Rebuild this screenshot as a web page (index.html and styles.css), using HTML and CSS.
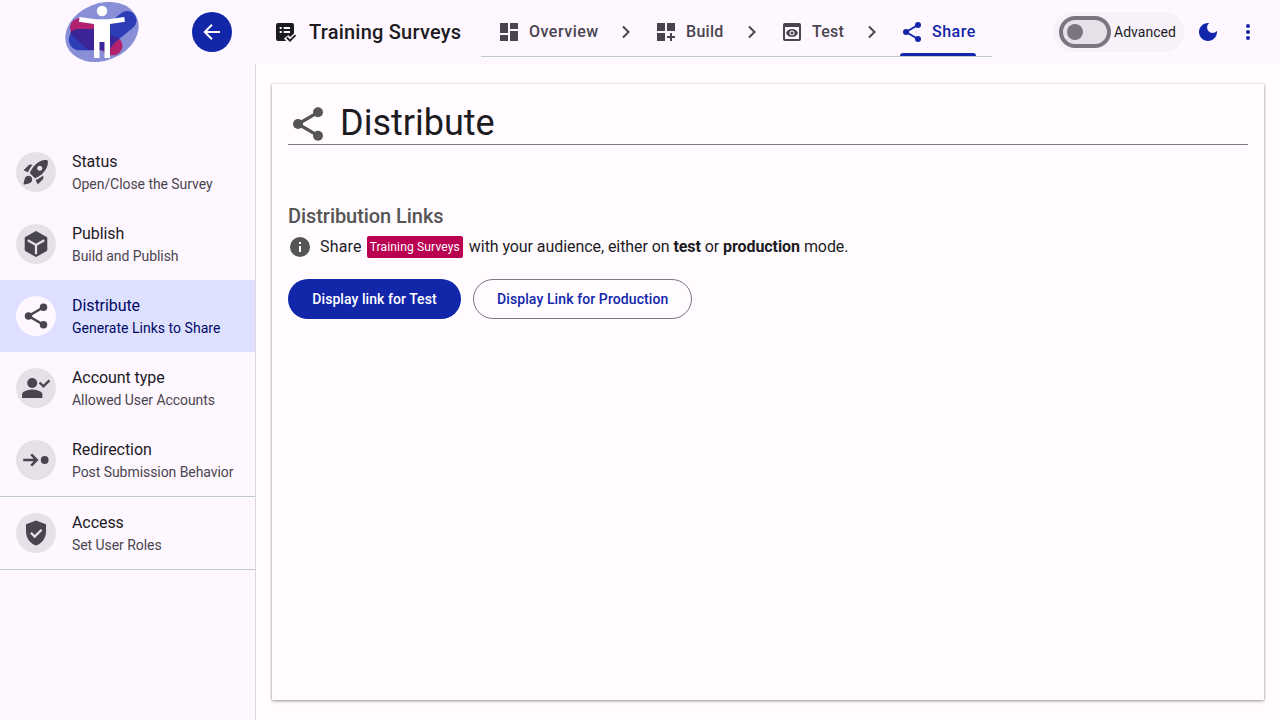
FILE: index.html
```html
<!DOCTYPE html>
<html lang="en">
<head>
<meta charset="utf-8">
<title>Training Surveys</title>
<link rel="stylesheet" href="styles.css">
</head>
<body>
<svg width="0" height="0" class="defs">
  <symbol id="share" viewBox="0 0 24 24"><g fill="currentColor"><circle cx="18" cy="5" r="3"/><circle cx="6" cy="12" r="3"/><circle cx="18" cy="19" r="3"/></g><path d="M18 5 6 12l12 7" fill="none" stroke="currentColor" stroke-width="2"/></symbol>
  <symbol id="chev" viewBox="0 0 24 24"><path d="M9 6.5 14.5 12 9 17.5" fill="none" stroke="currentColor" stroke-width="2"/></symbol>
</svg>
<header class="topbar">
  <div class="brand">
    <svg class="logo" viewBox="65 2 74 60" width="74" height="60">
      <ellipse cx="102" cy="32" rx="37.8" ry="28.6" transform="rotate(-21.6 102 32)" fill="#888fd6"/>
      <path d="M79.5 27.5 113 45.8" stroke="#b1216d" stroke-width="19" stroke-linecap="round"/>
      <path d="M127 20.5 103 40" stroke="#2d3db5" stroke-width="19" stroke-linecap="round"/>
      <path d="M79.5 39.7h24" stroke="#2d3db5" stroke-width="21.3" stroke-linecap="round"/>
      <path d="M71 31.500q3.500-2.500 8.500-2.500h16l23.500 9.500-12 11.500H88L70.500 34z" fill="#3a2498"/>
      <g fill="#fff"><circle cx="102" cy="11" r="5.2"/><path d="M79.500 17 96 19.200h12L124.200 17l.8 4.700L110 24v34h-5.500V42h-5v16H94V24l-15-2.300z"/></g>
    </svg>
    <button class="back" aria-label="Back"><svg width="24" height="24" viewBox="0 0 24 24"><path d="M20 12H5.500M12 4.700 4.700 12l7.300 7.300" fill="none" stroke="#fff" stroke-width="2"/></svg></button>
  </div>
  <div class="title">
    <svg width="24" height="24" viewBox="0 0 24 24"><path d="M5 3h14a2 2 0 0 1 2 2v8.500l-3.800 3.600-2-1.800-4.200 3.100L13.200 21H5a2 2 0 0 1-2-2V5a2 2 0 0 1 2-2z" fill="#1c1b1f"/><path d="M6.700 7.100h2v2h-2zM6.700 11h2v2h-2zM10.700 7.100H17v2h-6.300zM10.700 11H17v2h-6.300z" fill="#fef7ff"/><path d="m13.800 17.500 3.200 3.200 5.500-5.600" fill="none" stroke="#1c1b1f" stroke-width="1.800"/></svg>
    <span>Training Surveys</span>
  </div>
  <nav class="tabs">
    <a class="tab overview"><svg width="24" height="24" viewBox="0 0 24 24" fill="currentColor"><path d="M3 13h8V3H3zm0 8h8v-6H3zm10 0h8V11h-8zm0-18v6h8V3z"/></svg>Overview</a>
    <svg class="sep"><use href="#chev"/></svg>
    <a class="tab build"><svg width="24" height="24" viewBox="0 0 24 24" fill="currentColor"><path d="M3 3h8v8H3zm10 0h8v8h-8zM3 13h8v8H3zm13 0h2v3h3v2h-3v3h-2v-3h-3v-2h3z"/></svg>Build</a>
    <svg class="sep"><use href="#chev"/></svg>
    <a class="tab test"><svg width="24" height="24" viewBox="0 0 24 24" fill="currentColor"><path fill-rule="evenodd" d="M5 3h14a2 2 0 0 1 2 2v14a2 2 0 0 1-2 2H5a2 2 0 0 1-2-2V5a2 2 0 0 1 2-2zm0 4v12h14V7z"/><path fill-rule="evenodd" d="M12 9c2.700 0 5 1.600 6 4-1 2.400-3.300 4-6 4s-5-1.600-6-4c1-2.400 3.300-4 6-4zm0 1.500a2.500 2.500 0 1 0 0 5 2.500 2.500 0 0 0 0-5z"/><circle cx="12" cy="13" r="1.500"/></svg>Test</a>
    <svg class="sep"><use href="#chev"/></svg>
    <a class="tab active"><svg width="24" height="24"><use href="#share"/></svg>Share</a>
  </nav>
  <div class="actions">
    <label class="advanced"><span class="switch"><span class="thumb"></span></span>Advanced</label>
    <svg class="moon" width="24" height="24" viewBox="0 0 24 24" fill="#1226aa"><path d="M12 3c-4.970 0-9 4.030-9 9s4.030 9 9 9 9-4.030 9-9c0-.46-.04-.92-.1-1.360-.98 1.370-2.580 2.260-4.400 2.260-2.980 0-5.400-2.420-5.400-5.400 0-1.810.89-3.420 2.260-4.400C12.920 3.040 12.460 3 12 3z"/></svg>
    <svg width="24" height="24" viewBox="0 0 24 24" fill="#1226aa"><circle cx="12" cy="6" r="2"/><circle cx="12" cy="12" r="2"/><circle cx="12" cy="18" r="2"/></svg>
  </div>
</header>
<div class="body">
  <aside class="sidebar">
    <a class="item"><span class="avatar"><svg width="30" height="30" viewBox="0 0 24 24" fill="currentColor"><path d="M9.190 6.350c-2.040 2.290-3.440 5.580-3.570 5.890L2 10.690l4.050-4.050c.47-.47 1.150-.68 1.810-.55zM11.170 17s3.740-1.550 5.890-3.700c5.400-5.400 4.500-9.620 4.210-10.570-.95-.3-5.170-1.190-10.570 4.210C8.550 9.090 7 12.830 7 12.830zM17.650 14.810c-2.290 2.040-5.580 3.440-5.890 3.570L13.310 22l4.050-4.050c.47-.47.68-1.150.55-1.810zM9 18c0 .83-.34 1.580-.88 2.120C6.940 21.300 2 22 2 22s.7-4.940 1.880-6.120C4.420 15.340 5.170 15 6 15c1.660 0 3 1.340 3 3z"/><circle cx="15" cy="9" r="2" fill="#e6e1e9"/></svg></span><span class="text"><b>Status</b><i>Open/Close the Survey</i></span></a>
    <a class="item"><span class="avatar"><svg width="40" height="40" viewBox="0 0 40 40"><path d="M20 8.200 30.200 14v12L20 31.800 9.800 26V14z" fill="currentColor" stroke="currentColor" stroke-width="2.200" stroke-linejoin="round"/><path d="M11.800 16.200 20 21l8.200-4.800M20 21v9.300" fill="none" stroke="#e6e1e9" stroke-width="2.300"/></svg></span><span class="text"><b>Publish</b><i>Build and Publish</i></span></a>
    <a class="item selected"><span class="avatar"><svg width="30" height="30"><use href="#share"/></svg></span><span class="text"><b>Distribute</b><i>Generate Links to Share</i></span></a>
    <a class="item"><span class="avatar"><svg width="40" height="40" viewBox="0 0 40 40"><circle cx="16.200" cy="15" r="5" fill="currentColor"/><path d="M6 30v-3.500q0-2 2-3 4-2 8.200-2t8.200 2q2 1 2 3V30z" fill="currentColor"/><path d="m23.600 14.500 3.800 3.800 6-6" fill="none" stroke="currentColor" stroke-width="2.400"/></svg></span><span class="text"><b>Account type</b><i>Allowed User Accounts</i></span></a>
    <a class="item"><span class="avatar"><svg width="40" height="40" viewBox="0 0 40 40"><path d="M7.200 20H20.500M15.200 14.300l5.600 5.700-5.600 5.700" fill="none" stroke="currentColor" stroke-width="2.500"/><circle cx="28.700" cy="20" r="3.900" fill="currentColor"/></svg></span><span class="text"><b>Redirection</b><i>Post Submission Behavior</i></span></a>
    <hr>
    <a class="item"><span class="avatar"><svg width="40" height="40" viewBox="0 0 40 40"><path d="m20 7.500 10 3.700v7.600c0 6.300-4.200 12.100-10 13.700-5.800-1.600-10-7.400-10-13.700v-7.600z" fill="currentColor"/><path d="m14.900 19.800 3.800 3.800 6.900-6.900" fill="none" stroke="#e6e1e9" stroke-width="2.300"/></svg></span><span class="text"><b>Access</b><i>Set User Roles</i></span></a>
    <hr>
  </aside>
  <main class="card">
    <h1 class="heading"><svg width="40" height="40"><use href="#share"/></svg><span>Distribute</span></h1>
    <h2 class="subhead">Distribution Links</h2>
    <p class="info"><svg width="24" height="24" viewBox="0 0 24 24"><circle cx="12" cy="12" r="10" fill="#555"/><path d="M11 7h2v2h-2zM11 11h2v6h-2z" fill="#fff"/></svg><span><span class="lead">Share</span> <span class="chip">Training Surveys</span> with your audience, either on <strong>test</strong> or <strong>production</strong> mode.</span></p>
    <div class="buttons"><button class="btn filled">Display link for Test</button><button class="btn outlined">Display Link for Production</button></div>
  </main>
</div>
</body>
</html>
```
FILE: styles.css
```css
* { box-sizing: border-box; }
body { margin: 0; height: 720px; overflow: hidden; background: #fffbff; color: #1c1b1f; font-family: Roboto, sans-serif; display: flex; flex-direction: column; }
svg { display: block; flex: none; }
.defs { position: absolute; }
button { font-family: inherit; cursor: pointer; }
.topbar { height: 64px; flex: none; display: flex; background: #fef7ff; }
.brand { width: 256px; padding-left: 65px; display: flex; align-items: center; gap: 53px; }
.back { width: 40px; height: 40px; border: 0; padding: 0; border-radius: 50%; background: #1226aa; display: grid; place-items: center; }
.title { width: 225px; padding-left: 17px; display: flex; align-items: center; gap: 12px; font-size: 20px; font-weight: 500; letter-spacing: .22px; white-space: nowrap; }
.tabs { width: 511px; height: 57px; padding: 7px 16px 0; display: flex; border-bottom: 1px solid #bfc8ca; color: #49454e; }
.tab { display: flex; align-items: center; gap: 8px; font-size: 16px; font-weight: 500; letter-spacing: .5px; border-bottom: 3px solid transparent; padding-top: 3px; }
.tab.overview { width: 101px; }
.tab.build { width: 70px; letter-spacing: .3px; }
.tab.test { width: 64px; letter-spacing: .2px; }
.tab.active { width: 76px; color: #1226aa; position: relative; }
.tab.active::after { content: ""; position: absolute; left: 0; right: 0; bottom: -3px; height: 3px; border-radius: 3px 3px 0 0; background: #1226aa; }
.sep { width: 24px; height: 24px; margin: 13px 16px 0; }
.actions { margin-left: auto; padding-right: 20px; display: flex; align-items: center; }
.advanced { width: 131px; height: 40px; padding-left: 6px; border-radius: 20px; background: #f7f2fa; display: flex; align-items: center; gap: 3px; font-size: 14px; letter-spacing: .03px; }
.switch { width: 52px; height: 32px; border: 4px solid #7a757f; border-radius: 16px; background: #e6e1e9; display: flex; align-items: center; padding-left: 4px; }
.thumb { width: 16px; height: 16px; border-radius: 50%; background: #7a757f; }
.moon { margin: 0 16px 0 12px; }
.body { flex: 1; display: flex; }
.sidebar { width: 256px; padding-top: 72px; background: #fef7ff; border-right: 1px solid #dcd5de; }
.item { height: 72px; padding-left: 16px; display: flex; align-items: center; gap: 16px; color: #49454e; }
.avatar { width: 40px; height: 40px; border-radius: 50%; background: #e6e1e9; color: #49454e; display: grid; place-items: center; }
.text { display: flex; flex-direction: column; white-space: nowrap; }
.text b { font-weight: 400; font-size: 16px; line-height: 24px; letter-spacing: -.07px; color: #1c1b1f; }
.text i { font-style: normal; font-size: 14px; line-height: 20px; letter-spacing: -.06px; }
.selected { background: #dee0ff; }
.selected .avatar { background: #fef7ff; }
.selected .text b, .selected .text i { color: #000a64; }
.selected .text i { letter-spacing: .03px; }
.sidebar hr { margin: 0; border: 0; height: 1px; background: #bfc8ca; }
.card { flex: 1; margin: 20px 16px; padding: 16px; background: #fffbff; box-shadow: 0 1px 3px rgba(0,0,0,.4), 0 0 1px rgba(0,0,0,.2); }
.heading { margin: 0; height: 45px; padding-top: 3px; display: flex; align-items: center; gap: 12px; font-size: 36px; font-weight: 400; line-height: 40px; border-bottom: 1px solid #7a757f; }
.heading svg { color: #555; }
.heading span { padding-bottom: 2px; }
.subhead { margin: 57px 0 0; font-size: 20px; line-height: 28px; font-weight: 500; letter-spacing: -.06px; color: #555; }
.info { margin: 5px 0 0; height: 24px; display: flex; align-items: center; gap: 8px; font-size: 16px; line-height: 24px; letter-spacing: -.07px; }
.lead { letter-spacing: .2px; }
.chip { display: inline-block; height: 22px; margin: 0 2px 0 1px; padding: 0 3px; border-radius: 2px; background: #ba0051; color: #fff; font-size: 12px; line-height: 22px; letter-spacing: .16px; vertical-align: 1px; }
.info strong { font-weight: 700; }
.buttons { display: flex; gap: 12px; margin-top: 20px; }
.btn { height: 40px; padding: 0 24px; border-radius: 20px; font-size: 14px; font-weight: 500; letter-spacing: .1px; white-space: nowrap; }
.filled { width: 173px; border: 0; background: #1226aa; color: #fff; letter-spacing: .06px; }
.outlined { width: 219px; padding: 0 23px; border: 1px solid #7a757f; background: transparent; color: #1226aa; }
```
